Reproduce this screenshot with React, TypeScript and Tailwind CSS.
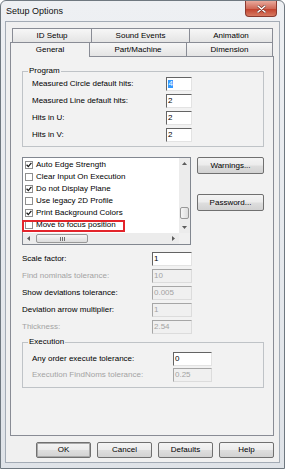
import React from "react";

const BTN =
  "flex items-center justify-center text-[8px] leading-none border border-[#707070] rounded-[2px] bg-[linear-gradient(to_bottom,#f4f4f4_0%,#ececec_48%,#dedede_52%,#d2d2d2_100%)]";

function Check({ checked }: { checked: boolean }) {
  return (
    <span className="w-[8px] h-[8px] border border-[#8f8f8f] bg-white flex items-center justify-center shrink-0">
      {checked && (
        <svg width="6" height="6" viewBox="0 0 6 6">
          <path d="M0.6 2.8 L2.3 4.6 L5.4 0.9" fill="none" stroke="#1a1a1a" strokeWidth="1.3" />
        </svg>
      )}
    </span>
  );
}

function Field({
  value,
  w,
  disabled,
  selected,
}: {
  value: string;
  w: string;
  disabled?: boolean;
  selected?: boolean;
}) {
  return (
    <div
      className={`${w} h-[14px] shrink-0 border flex items-center pl-[1px] text-[8px] leading-none ${
        disabled
          ? "border-t-[#a6a6a6] border-l-[#a6a6a6] border-r-[#dcdcdc] border-b-[#dcdcdc] bg-[#f0f0f0] text-[#a3a3a3]"
          : "border-t-[#646464] border-l-[#646464] border-r-[#e3e3e3] border-b-[#e3e3e3] bg-white text-black"
      }`}
    >
      {selected ? <span className="bg-[#3399ff] text-white px-[0.5px]">{value}</span> : value}
    </div>
  );
}

function Tab({ label, w, first, selected }: { label: string; w: string; first?: boolean; selected?: boolean }) {
  return (
    <div
      className={`${w} ${
        selected ? "h-[15px] -mb-px relative z-10 bg-[#f2f2f2]" : "h-[14px] bg-[linear-gradient(to_bottom,#f7f7f7,#e4e4e4)]"
      } ${first ? "border-l" : ""} border-t border-r border-[#898c95] flex items-start justify-center pt-[2px] text-[8px] leading-[9px] text-black`}
    >
      {label}
    </div>
  );
}

function Tri({ dir }: { dir: "up" | "down" | "left" | "right" }) {
  const pts =
    dir === "up" ? "0,3 2.5,0 5,3" : dir === "down" ? "0,0 5,0 2.5,3" : dir === "left" ? "3,0 3,5 0,2.5" : "0,0 0,5 3,2.5";
  const vert = dir === "up" || dir === "down";
  return (
    <svg width={vert ? 5 : 3} height={vert ? 3 : 5} viewBox={vert ? "0 0 5 3" : "0 0 3 5"}>
      <polygon points={pts} fill="#5c5c5c" />
    </svg>
  );
}

const items: [string, boolean][] = [
  ["Auto Edge Strength", true],
  ["Clear Input On Execution", false],
  ["Do not Display Plane", true],
  ["Use legacy 2D Profile", false],
  ["Print Background Colors", true],
  ["Move to focus position", false],
];

export default function App() {
  return (
    <div className="w-[285px] h-[469px] flex flex-col border border-[#6f7880] rounded-t-[6px] bg-[linear-gradient(to_bottom,#eef0f3,#dfe3e8)] font-['Liberation_Sans',Arial,sans-serif] text-black overflow-hidden">
      {/* title bar */}
      <div className="h-[20px] flex items-start justify-between shrink-0">
        <span className="text-[9px] leading-[11px] pl-[5px] pt-[5px] text-[#111]">Setup Options</span>
        <div className="mr-[7px] w-[32px] h-[16px] rounded-b-[4px] border border-t-0 border-[#8a3a30] bg-[linear-gradient(to_bottom,#e9a99c,#d06a58_50%,#c2432f_55%,#d77a62)] flex items-center justify-center">
          <svg width="9" height="8" viewBox="0 0 9 8">
            <path d="M1 1 L8 7 M8 1 L1 7" stroke="#6b2a20" strokeWidth="2.6" strokeLinecap="round" />
            <path d="M1 1 L8 7 M8 1 L1 7" stroke="#ffffff" strokeWidth="1.6" strokeLinecap="round" />
          </svg>
        </div>
      </div>

      {/* client */}
      <div className="flex-1 mx-[4px] mb-[5px] border border-[#a3abb5] bg-[#f0f0f0] pl-[4px] pr-[5px] pt-[6px] flex flex-col">
        {/* tabs */}
        <div className="flex ml-[2px]">
          <Tab label="ID Setup" w="w-[80px]" first />
          <Tab label="Sound Events" w="w-[98px]" />
          <Tab label="Animation" w="w-[83px]" />
        </div>
        <div className="flex">
          <Tab label="General" w="w-[80px]" first selected />
          <Tab label="Part/Machine" w="w-[97px]" />
          <Tab label="Dimension" w="w-[86px]" />
        </div>

        {/* panel */}
        <div className="h-[380px] border border-[#898c95] bg-[#f2f2f2] flex flex-col text-[8px] leading-[10px]">
          {/* Program */}
          <fieldset className="mt-[9px] ml-[11px] w-[242px] border border-[#bfc3c7] pl-[5px] pb-[4px]">
            <legend className="px-[1px] text-[8px] leading-[10px]">Program</legend>
            <div className="mt-[1px] pl-[4px] flex flex-col gap-[3px]">
              <div className="flex items-center h-[14px]">
                <span className="w-[134px]">Measured Circle default hits:</span>
                <Field value="4" w="w-[26px]" selected />
              </div>
              <div className="flex items-center h-[14px]">
                <span className="w-[134px]">Measured Line default hits:</span>
                <Field value="2" w="w-[26px]" />
              </div>
              <div className="flex items-center h-[14px]">
                <span className="w-[134px]">Hits in U:</span>
                <Field value="2" w="w-[26px]" />
              </div>
              <div className="flex items-center h-[14px]">
                <span className="w-[134px]">Hits in V:</span>
                <Field value="2" w="w-[26px]" />
              </div>
            </div>
          </fieldset>

          {/* list + buttons */}
          <div className="mt-[10px] ml-[11px] flex items-start">
            <div className="relative w-[169px] h-[88px] border border-[#828790] bg-white flex flex-col">
              <div className="flex h-[75px]">
                <div className="flex-1 flex flex-col pt-[1px]">
                  {items.map(([t, c]) => (
                    <div key={t} className="h-[12px] flex items-center pl-[2px] gap-[3px] whitespace-nowrap">
                      <Check checked={c} />
                      <span>{t}</span>
                    </div>
                  ))}
                </div>
                <div className="w-[11px] bg-[#ececec] flex flex-col">
                  <div className="h-[11px] flex items-center justify-center">
                    <Tri dir="up" />
                  </div>
                  <div className="h-[38px]" />
                  <div className="h-[12px] mx-[1px] border border-[#989898] rounded-[2px] bg-[linear-gradient(to_right,#f6f6f6,#dedede)]" />
                  <div className="flex-1" />
                  <div className="h-[11px] flex items-center justify-center">
                    <Tri dir="down" />
                  </div>
                </div>
              </div>
              <div className="flex h-[11px]">
                <div className="flex-1 bg-[#ececec] flex items-center">
                  <div className="w-[11px] flex items-center justify-center">
                    <Tri dir="left" />
                  </div>
                  <div className="ml-[2px] w-[52px] h-[9px] border border-[#989898] rounded-[2px] bg-[linear-gradient(to_bottom,#f6f6f6,#dcdcdc)] flex items-center justify-center gap-[1px]">
                    <span className="w-px h-[4px] bg-[#707070]" />
                    <span className="w-px h-[4px] bg-[#707070]" />
                    <span className="w-px h-[4px] bg-[#707070]" />
                  </div>
                  <div className="flex-1" />
                  <div className="w-[11px] flex items-center justify-center">
                    <Tri dir="right" />
                  </div>
                </div>
                <div className="w-[11px] bg-[#f0f0f0]" />
              </div>
              <div className="absolute left-[-1px] top-[62px] w-[103px] h-[12px] border-2 border-[#e3242b]" />
            </div>
            <div className="ml-[6px] flex flex-col">
              <div className={`w-[67px] h-[17px] ${BTN}`}>Warnings...</div>
              <div className={`mt-[20px] w-[67px] h-[17px] ${BTN}`}>Password...</div>
            </div>
          </div>

          {/* tolerances */}
          <div className="mt-[7px] ml-[11px] flex flex-col gap-[3px]">
            <div className="flex items-center h-[14px]">
              <span className="w-[130px]">Scale factor:</span>
              <Field value="1" w="w-[40px]" />
            </div>
            <div className="flex items-center h-[14px]">
              <span className="w-[130px] text-[#a3a3a3]">Find nominals tolerance:</span>
              <Field value="10" w="w-[40px]" disabled />
            </div>
            <div className="flex items-center h-[14px]">
              <span className="w-[130px]">Show deviations tolerance:</span>
              <Field value="0.005" w="w-[40px]" disabled />
            </div>
            <div className="flex items-center h-[14px]">
              <span className="w-[130px]">Deviation arrow multiplier:</span>
              <Field value="1" w="w-[40px]" disabled />
            </div>
            <div className="flex items-center h-[14px]">
              <span className="w-[130px] text-[#a3a3a3]">Thickness:</span>
              <Field value="2.54" w="w-[40px]" disabled />
            </div>
          </div>

          {/* Execution */}
          <fieldset className="mt-[3px] ml-[11px] w-[242px] border border-[#bfc3c7] pl-[5px] pb-[5px]">
            <legend className="px-[1px] text-[8px] leading-[10px]">Execution</legend>
            <div className="mt-[5px] pl-[4px] flex flex-col gap-[2px]">
              <div className="flex items-center h-[14px]">
                <span className="w-[141px]">Any order execute tolerance:</span>
                <Field value="0" w="w-[39px]" />
              </div>
              <div className="flex items-center h-[14px]">
                <span className="w-[141px] text-[#a3a3a3]">Execution FindNoms tolerance:</span>
                <Field value="0.25" w="w-[39px]" disabled />
              </div>
            </div>
          </fieldset>
        </div>

        {/* dialog buttons */}
        <div className="mt-[6px] pl-[26px] flex gap-[6px]">
          <div className={`w-[55px] h-[16px] ${BTN} border-[#3d3d3d] shadow-[inset_0_0_0_1px_#a9a9a9]`}>OK</div>
          <div className={`w-[55px] h-[16px] ${BTN}`}>Cancel</div>
          <div className={`w-[55px] h-[16px] ${BTN}`}>Defaults</div>
          <div className={`w-[55px] h-[16px] ${BTN}`}>Help</div>
        </div>
      </div>
    </div>
  );
}
